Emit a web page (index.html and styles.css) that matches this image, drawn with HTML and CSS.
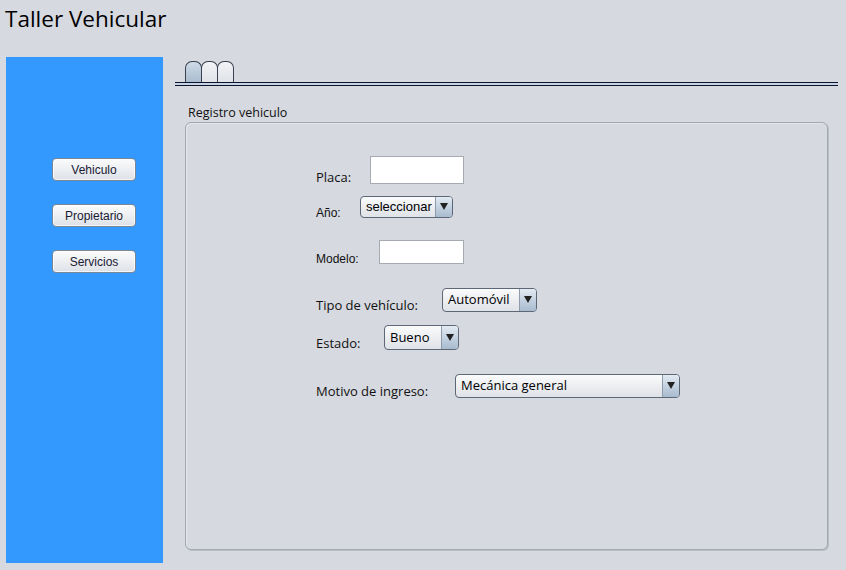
FILE: index.html
```html
<!DOCTYPE html>
<html lang="es">
<head>
<meta charset="utf-8">
<title>Taller Vehicular</title>
<link rel="stylesheet" href="styles.css">
</head>
<body>
<header class="title">Taller Vehicular</header>
<div class="main">
  <nav class="sidebar">
    <button class="btn">Vehiculo</button>
    <button class="btn">Propietario</button>
    <button class="btn">Servicios</button>
  </nav>
  <section class="content">
    <div class="tabs">
      <span class="tab active"></span>
      <span class="tab"></span>
      <span class="tab"></span>
    </div>
    <div class="tabline"></div>
    <div class="group-label">Registro vehiculo</div>
    <div class="group">
      <div class="row r1">
        <span class="lbl seg l-placa">Placa:</span>
        <span class="input w-placa"></span>
      </div>
      <div class="row r2">
        <span class="lbl small l-anio">Año:</span>
        <span class="combo arial w-anio"><span class="val">seleccionar</span><span class="arrow"></span></span>
      </div>
      <div class="row r3">
        <span class="lbl small l-modelo">Modelo:</span>
        <span class="input w-modelo"></span>
      </div>
      <div class="row r4">
        <span class="lbl seg l-tipo">Tipo de vehículo:</span>
        <span class="combo seg w-tipo"><span class="val">Automóvil</span><span class="arrow"></span></span>
      </div>
      <div class="row r5">
        <span class="lbl seg l-estado">Estado:</span>
        <span class="combo seg w-estado"><span class="val">Bueno</span><span class="arrow"></span></span>
      </div>
      <div class="row r6">
        <span class="lbl seg l-motivo">Motivo de ingreso:</span>
        <span class="combo seg w-motivo"><span class="val">Mecánica general</span><span class="arrow"></span></span>
      </div>
    </div>
  </section>
</div>
</body>
</html>
```

FILE: styles.css
```css
* { box-sizing: border-box; }
html, body { margin: 0; padding: 0; }
body {
  width: 846px;
  height: 570px;
  background: #d6d9df;
  font-family: "Open Sans", "Noto Sans", sans-serif;
  color: #000;
  overflow: hidden;
}
.title {
  height: 57px;
  padding: 3px 0 0 5px;
  font-family: "Open Sans", sans-serif;
  font-size: 22.5px;
  line-height: 32px;
  color: #000;
}
.main {
  display: flex;
  padding-left: 6px;
}
.sidebar {
  width: 157px;
  height: 506px;
  background: #3399ff;
  display: flex;
  flex-direction: column;
  align-items: flex-start;
  padding: 101px 0 0 46px;
  gap: 23px;
}
.btn {
  width: 84px;
  height: 23px;
  margin: 0;
  padding: 0;
  border: 1px solid #7b8796;
  border-radius: 4px;
  background: linear-gradient(#fbfbfc 0%, #eef0f3 45%, #dde1e7 100%);
  box-shadow: inset 0 0 0 1px rgba(255,255,255,0.7);
  font-family: "Liberation Sans", Arial, sans-serif;
  font-size: 12px;
  color: #1a1a33;
}
.content {
  width: 663px;
  margin-left: 12px;
}
.tabs {
  display: flex;
  padding: 4px 0 0 10px;
  height: 25px;
}
.tab {
  width: 17px;
  height: 21px;
  border: 1px solid #3a4050;
  border-bottom: none;
  border-radius: 7px 7px 0 0;
  background: linear-gradient(#f2f3f5, #dfe2e7);
  margin-right: -1px;
}
.tab.active {
  background: linear-gradient(#cfdae6, #a9bccf);
}
.tabline {
  height: 4px;
  border-top: 1px solid #0e1430;
  border-bottom: 1px solid #0e1430;
  background: #c6d3e3;
}
.group-label {
  padding: 18px 0 0 13px;
  height: 36px;
  font-size: 12.5px;
  line-height: 18px;
  color: #111;
}
.group {
  margin-left: 10px;
  width: 643px;
  height: 428px;
  border: 1px solid #a3a8b0;
  border-radius: 6px;
  background: #d6d9df;
  box-shadow: 1px 1px 0 #b9bdc4, inset 1px 1px 0 #e4e6ea;
  padding-left: 130px;
  padding-top: 0;
}
.row {
  display: flex;
  align-items: flex-start;
}
.r1 { margin-top: 33px; height: 28px; }
.r2 { margin-top: 12px; height: 22px; }
.r3 { margin-top: 22px; height: 24px; }
.r4 { margin-top: 24px; height: 24px; }
.r5 { margin-top: 13px; height: 25px; }
.r6 { margin-top: 24px; height: 24px; }

.lbl { display: block; white-space: nowrap; color: #111; }
.seg { font-family: "Open Sans", sans-serif; font-size: 13px; line-height: 18px; }
.small { font-family: "Liberation Sans", Arial, sans-serif; font-size: 12px; line-height: 16px; }
.arial { font-family: "Liberation Sans", Arial, sans-serif; font-size: 13px; }

.l-placa { width: 54px; margin-top: 12px; }
.l-anio { width: 44px; margin-top: 9px; }
.l-modelo { width: 63px; margin-top: 11px; }
.l-tipo { width: 126px; margin-top: 8px; }
.l-estado { width: 68px; margin-top: 9px; }
.l-motivo { width: 139px; margin-top: 8px; }

.input {
  display: block;
  background: #fff;
  border: 1px solid #a6abb2;
}
.w-placa { width: 94px; height: 28px; }
.w-modelo { width: 85px; height: 24px; }

.combo {
  display: flex;
  align-items: stretch;
  border: 1px solid #5d6776;
  border-radius: 4px;
  background: linear-gradient(#fbfbfc 0%, #eceef1 50%, #dfe2e7 100%);
  overflow: hidden;
  color: #000;
}
.combo .val {
  flex: 1;
  padding-left: 5px;
  display: flex;
  align-items: center;
  white-space: nowrap;
  padding-bottom: 2px;
}
.combo .arrow {
  width: 17px;
  border-left: 1px solid #8e9bab;
  background: linear-gradient(#e3eaf2 0%, #c4d2e1 50%, #a8bbcf 100%);
  position: relative;
}
.combo .arrow::after {
  content: "";
  position: absolute;
  left: 4px;
  top: 50%;
  margin-top: -4px;
  border-left: 4px solid transparent;
  border-right: 4px solid transparent;
  border-top: 7px solid #222;
}
.combo.seg { font-size: 13px; }
.w-anio { width: 93px; height: 22px; }
.w-tipo { width: 95px; height: 24px; }
.w-estado { width: 75px; height: 25px; }
.w-motivo { width: 225px; height: 24px; }
```
